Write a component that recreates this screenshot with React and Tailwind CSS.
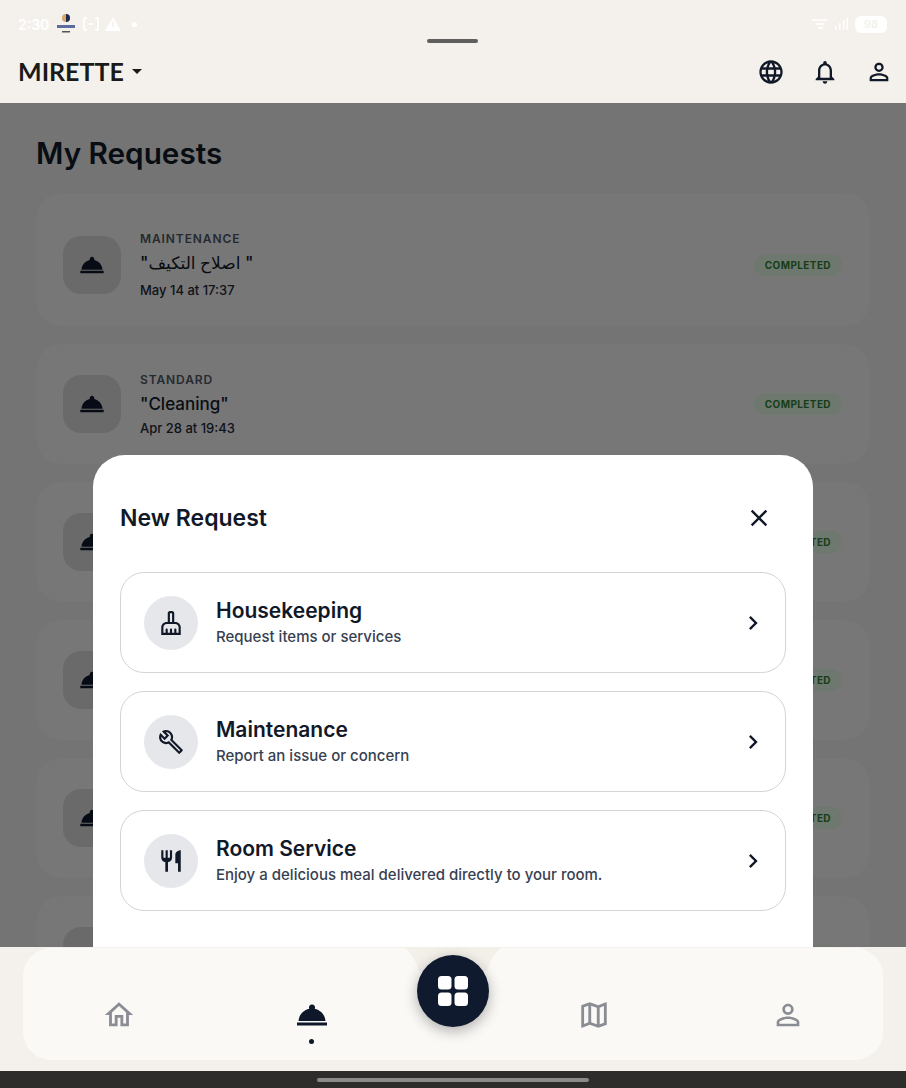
import {
  MdArrowDropDown,
  MdChevronRight,
  MdClose,
  MdLanguage,
  MdNotificationsNone,
  MdOutlineBuild,
  MdOutlineCleaningServices,
  MdOutlineHome,
  MdOutlineMap,
  MdPersonOutline,
  MdRestaurant,
  MdRoomService,
} from "react-icons/md";

const requests = [
  { type: "MAINTENANCE", title: "\"اصلاح التكيف \"", date: "May 14 at 17:37", tall: true },
  { type: "STANDARD", title: "\"Cleaning\"", date: "Apr 28 at 19:43" },
  { type: "STANDARD", title: "\"Cleaning\"", date: "Apr 20 at 11:02" },
  { type: "STANDARD", title: "\"Cleaning\"", date: "Apr 12 at 10:15" },
  { type: "STANDARD", title: "\"Cleaning\"", date: "Apr 03 at 09:30" },
  { type: "STANDARD", title: "\"Cleaning\"", date: "Mar 27 at 18:21" },
];

const options = [
  { title: "Housekeeping", text: "Request items or services", icon: MdOutlineCleaningServices },
  { title: "Maintenance", text: "Report an issue or concern", icon: MdOutlineBuild },
  { title: "Room Service", text: "Enjoy a delicious meal delivered directly to your room.", icon: MdRestaurant },
];

function StatusBar() {
  return (
    <div className="flex h-[40px] items-center justify-between pl-[18px] pr-[19px] pt-[8px] text-white">
      <div className="flex items-center gap-[6px]">
        <span className="text-[14px] font-semibold">2:30</span>
        <svg width="22" height="22" viewBox="0 0 22 22">
          <circle cx="11" cy="5" r="4" fill="#d9a760" />
          <path d="M11 1a4 4 0 0 1 0 8z" fill="#1f2a55" />
          <rect x="2" y="12" width="18" height="3" fill="#5c6aa0" />
          <rect x="7" y="18" width="8" height="1.5" fill="#555" />
        </svg>
        <svg width="16" height="14" viewBox="0 0 16 14" fill="none" stroke="white" strokeWidth="1.5">
          <path d="M4 1H1v12h3M12 1h3v12h-3M5.5 7h5" />
        </svg>
        <svg width="16" height="14" viewBox="0 0 16 14">
          <path d="M8 0l8 14H0z" fill="white" />
          <rect x="7.2" y="5" width="1.6" height="5" fill="#f4f1ec" />
        </svg>
        <span className="ml-[5px] size-[5px] rounded-full bg-white" />
      </div>
      <div className="flex items-center gap-[5px]">
        <svg width="18" height="12" viewBox="0 0 18 12" fill="none" stroke="white" strokeWidth="1.5">
          <path d="M1 2h15M4 6h10M7 10h5" />
        </svg>
        <svg width="14" height="14" viewBox="0 0 14 14" fill="white">
          <rect x="1" y="9" width="1.5" height="4" />
          <rect x="5" y="6" width="1.5" height="7" />
          <rect x="9" y="3" width="1.5" height="10" />
          <rect x="12.5" y="1" width="1.5" height="12" />
        </svg>
        <span className="ml-[2px] flex h-[17px] w-[32px] items-center justify-center rounded-[6px] bg-white text-[11px] font-semibold text-[#f4f1ec]">
          98
        </span>
      </div>
    </div>
  );
}

function Header() {
  return (
    <header className="relative z-20 h-[103px] shrink-0 bg-[#f4f1ec]">
      <StatusBar />
      <div className="absolute left-[427px] top-[39px] h-[4px] w-[51px] rounded-full bg-[#5f5f5f]" />
      <div className="flex h-[63px] items-center justify-between pb-[1px] pl-[18px] pr-[13px]">
        <div className="flex items-center text-[#1a1a18]">
          <span className="font-['Lato'] text-[25px] font-bold leading-none">MIRETTE</span>
          <MdArrowDropDown className="ml-[1px] size-[24px]" />
        </div>
        <div className="flex items-center gap-[26px] pt-[1px] text-[#111827]">
          <MdLanguage className="size-[28px]" />
          <MdNotificationsNone className="size-[28px]" />
          <MdPersonOutline className="size-[28px]" />
        </div>
      </div>
    </header>
  );
}

function RequestCard({ request }) {
  return (
    <div
      className={`flex items-center rounded-[24px] border border-[#ececec] bg-[#eeeeee] pl-[26px] pr-[27px] ${
        request.tall ? "h-[133px] pt-[10px]" : "h-[120px]"
      }`}
    >
      <div className="flex size-[58px] shrink-0 items-center justify-center rounded-[18px] bg-[#d5d5d5]">
        <MdRoomService className="size-[28px] text-[#0f172a]" />
      </div>
      <div className="ml-[19px] flex-1">
        <div className="text-[12px] font-semibold leading-[16px] tracking-[0.9px] text-[#4b5563]">{request.type}</div>
        <div className="mt-[3px] font-['Inter','DejaVu_Sans',sans-serif] text-[17px] font-medium leading-[26px] text-[#111827]">
          {request.title}
        </div>
        <div className={`text-[13px] font-medium leading-[18px] text-[#1f2937] ${request.tall ? "mt-[5px]" : "mt-[2px]"}`}>
          {request.date}
        </div>
      </div>
      <span className="rounded-full bg-[#dcf0df] px-[11px] py-[5px] text-[10px] font-bold leading-[12px] tracking-[0.4px] text-[#2e7d32]">
        COMPLETED
      </span>
    </div>
  );
}

function OptionRow({ option }) {
  const Icon = option.icon;
  return (
    <div className="flex h-[101px] items-center rounded-[24px] border border-[#d4d4d8] pl-[23px] pr-[18px]">
      <div className="flex size-[54px] shrink-0 items-center justify-center rounded-full bg-[#e5e7eb]">
        <Icon className="size-[26px] text-[#111827]" />
      </div>
      <div className="ml-[18px] flex-1">
        <div className="text-[21px] font-semibold leading-[26px] text-[#111827]">{option.title}</div>
        <div className="mt-[3px] text-[15px] font-medium leading-[20px] text-[#374151]">{option.text}</div>
      </div>
      <MdChevronRight className="size-[28px] text-[#111827]" />
    </div>
  );
}

function BottomNav() {
  return (
    <nav className="relative z-20 h-[141px] shrink-0 bg-[#f4f1ec]">
      <div className="flex h-[124px] items-start px-[23px] pt-[1px]">
        <div className="flex h-[112px] flex-1 rounded-[28px] bg-[#fbf9f6]">
          <div className="flex w-[191px] justify-center pl-[1px] pt-[50px]">
            <MdOutlineHome className="size-[34px] text-[#8b8d94]" />
          </div>
          <div className="flex w-[191px] flex-col items-center pl-[4px] pt-[49px]">
            <MdRoomService className="size-[36px] text-[#0f172a]" />
            <span className="mt-[6px] size-[5px] rounded-full bg-[#0f172a]" />
          </div>
          <div className="w-[96px]" />
          <div className="flex w-[191px] justify-center pr-[5px] pt-[50px]">
            <MdOutlineMap className="size-[34px] text-[#8b8d94]" />
          </div>
          <div className="flex w-[191px] justify-center pt-[50px]">
            <MdPersonOutline className="size-[34px] text-[#8b8d94]" />
          </div>
        </div>
      </div>
      <svg className="absolute left-[403px] top-0" width="100" height="34" viewBox="0 0 100 34" fill="#f3f0ea">
        <path d="M0 0H100C92 4 88 12 84 24H16C12 12 8 4 0 0Z" />
      </svg>
      <div className="absolute left-[417px] top-[8px] flex size-[72px] items-center justify-center rounded-full bg-[#0f1a2e] shadow-[0_4px_14px_rgba(0,0,0,0.3)]">
        <svg width="30" height="30" viewBox="0 0 30 30" fill="white">
          <rect x="0" y="0" width="13.5" height="13.5" rx="3.5" />
          <rect x="16.5" y="0" width="13.5" height="13.5" rx="3.5" />
          <rect x="0" y="16.5" width="13.5" height="13.5" rx="3.5" />
          <rect x="16.5" y="16.5" width="13.5" height="13.5" rx="3.5" />
        </svg>
      </div>
      <div className="flex h-[17px] items-center justify-center bg-[#2f2d2b]">
        <div className="h-[4px] w-[272px] rounded-full bg-[#8a8a8a]" />
      </div>
    </nav>
  );
}

export default function App() {
  return (
    <div className="relative flex h-[1088px] w-[906px] flex-col overflow-hidden bg-[#f4f1ec] font-['Inter',sans-serif]">
      <Header />
      <main className="relative min-h-0 flex-1 overflow-hidden bg-[#e8e8e8] px-[36px] pt-[30px]">
        <h1 className="text-[29.7px] font-semibold leading-[40px] text-[#111827]">My Requests</h1>
        <div className="mt-[20px] flex flex-col gap-[18px]">
          {requests.map((request, i) => (
            <RequestCard key={i} request={request} />
          ))}
        </div>
        <div className="absolute inset-0 bg-black/50" />
        <div className="absolute bottom-0 left-[93px] top-[352px] w-[720px] rounded-t-[32px] bg-white px-[27px]">
          <div className="flex h-[117px] items-center justify-between pr-[13px] pt-[9px]">
            <h2 className="text-[23px] font-semibold text-[#111827]">New Request</h2>
            <MdClose className="-mt-[1px] size-[28px] text-[#111827]" />
          </div>
          <div className="flex flex-col gap-[18px]">
            {options.map((option) => (
              <OptionRow key={option.title} option={option} />
            ))}
          </div>
        </div>
      </main>
      <BottomNav />
    </div>
  );
}
